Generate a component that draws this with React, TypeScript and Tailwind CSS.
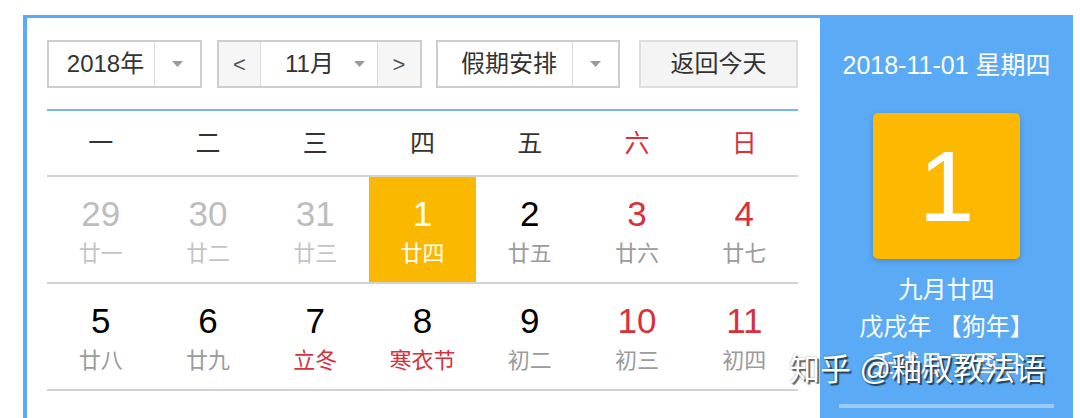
import React from 'react';

type Day = {
  num: number;
  lunar: string;
  muted?: boolean;
  redNum?: boolean;
  redLunar?: boolean;
  today?: boolean;
};

const WEEKDAYS = ['一', '二', '三', '四', '五', '六', '日'];

const WEEKS: Day[][] = [
  [
    { num: 29, lunar: '廿一', muted: true },
    { num: 30, lunar: '廿二', muted: true },
    { num: 31, lunar: '廿三', muted: true },
    { num: 1, lunar: '廿四', today: true },
    { num: 2, lunar: '廿五' },
    { num: 3, lunar: '廿六', redNum: true },
    { num: 4, lunar: '廿七', redNum: true },
  ],
  [
    { num: 5, lunar: '廿八' },
    { num: 6, lunar: '廿九' },
    { num: 7, lunar: '立冬', redLunar: true },
    { num: 8, lunar: '寒衣节', redLunar: true },
    { num: 9, lunar: '初二' },
    { num: 10, lunar: '初三', redNum: true },
    { num: 11, lunar: '初四', redNum: true },
  ],
];

function Caret() {
  return (
    <svg width="11" height="6" viewBox="0 0 11 6">
      <path d="M0 0h11L5.5 6z" fill="#9a9a9a" />
    </svg>
  );
}

function DayCell({ day }: { day: Day }) {
  let numColor = 'text-black';
  let lunarColor = 'text-[#9b9b9b]';
  if (day.muted) {
    numColor = 'text-[#bdbdbd]';
    lunarColor = 'text-[#c4c4c4]';
  }
  if (day.redNum) numColor = 'text-[#d7313b]';
  if (day.redLunar) lunarColor = 'text-[#d7313b]';
  if (day.today) {
    numColor = 'text-white';
    lunarColor = 'text-white';
  }

  return (
    <div
      className={`flex flex-col items-center pt-[20px] h-[105px] ${
        day.today ? 'bg-[#fbb800]' : ''
      }`}
    >
      <div className={`text-[35px] leading-[34px] ${numColor}`}>{day.num}</div>
      <div className={`mt-[10px] text-[22px] leading-[26px] ${lunarColor}`}>
        {day.lunar}
      </div>
    </div>
  );
}

export default function App() {
  return (
    <div className="relative w-[1080px] h-[418px] overflow-hidden bg-white pl-[23px] pt-[15px] font-['Liberation_Sans','Noto_Sans_CJK_SC',sans-serif]">
      <div className="flex w-[1050px] h-[420px] border-t-[3px] border-l-[4px] border-[#5aaaf5]">
        {/* calendar body */}
        <div className="w-[793px] pl-[20px] pr-[22px] pt-[22px]">
          <div className="flex items-center h-[48px] text-[24px] text-[#333]">
            <div className="flex h-full w-[155px] border-2 border-[#cdcdcd]">
              <div className="flex items-center justify-center w-[106px] pl-[8px] border-r border-[#dcdcdc]">
                2018年
              </div>
              <div className="flex flex-1 items-center justify-center">
                <Caret />
              </div>
            </div>

            <div className="ml-[15px] flex h-full w-[205px] border-2 border-[#cdcdcd]">
              <div className="flex items-center justify-center w-[42px] bg-[#f6f6f6] border-r border-[#dcdcdc] text-[22px] text-[#555]">
                &lt;
              </div>
              <div className="flex items-center justify-center gap-[20px] w-[117px] pl-[12px] border-r border-[#dcdcdc]">
                <span>11月</span>
                <Caret />
              </div>
              <div className="flex flex-1 items-center justify-center bg-[#f6f6f6] text-[22px] text-[#555]">
                &gt;
              </div>
            </div>

            <div className="ml-[14px] flex h-full w-[184px] border-2 border-[#cdcdcd]">
              <div className="flex items-center justify-center w-[135px] pl-[8px] border-r border-[#dcdcdc]">
                假期安排
              </div>
              <div className="flex flex-1 items-center justify-center">
                <Caret />
              </div>
            </div>

            <div className="ml-[19px] flex h-full flex-1 items-center justify-center border-2 border-[#dedede] bg-[#f4f4f4]">
              返回今天
            </div>
          </div>

          <div className="mt-[21px] border-t-2 border-[#78b6ee]" />

          <div className="grid grid-cols-7 h-[66px] border-b-2 border-[#d2d2d2] text-[25px]">
            {WEEKDAYS.map((w, i) => (
              <div
                key={w}
                className={`flex items-center justify-center pt-[2px] ${
                  i >= 5 ? 'text-[#d7313b]' : 'text-[#333]'
                }`}
              >
                {w}
              </div>
            ))}
          </div>

          {WEEKS.map((week, wi) => (
            <div key={wi} className="grid grid-cols-7 border-b-2 border-[#d2d2d2]">
              {week.map((d) => (
                <DayCell key={`${wi}-${d.num}`} day={d} />
              ))}
            </div>
          ))}
        </div>

        {/* today panel */}
        <div className="flex w-[253px] flex-col items-center bg-[#5aaaf5] pt-[31px] text-white">
          <div className="text-[25px] leading-[32px]">2018-11-01 星期四</div>
          <div className="mt-[32px] flex h-[146px] w-[147px] items-center justify-center rounded-[5px] bg-[#fdb801] shadow-[0_2px_6px_rgba(0,0,0,0.18)]">
            <span className="text-[100px] leading-none">1</span>
          </div>
          <div className="mt-[13px] text-[24px] leading-[36px]">九月廿四</div>
          <div className="text-[24px] leading-[37px]">戊戌年 【狗年】</div>
          <div className="text-[24px] leading-[37px]">壬戌月 丁酉日</div>
          <div className="mt-[22px] h-[4px] w-[215px] bg-[#9ccbf9]" />
        </div>
      </div>

      {/* site watermark */}
      <div className="absolute left-[789px] top-[350px] text-[31px] leading-[40px] text-white [text-shadow:2px_2px_1px_rgba(0,0,0,0.6),0_0_2px_rgba(0,0,0,0.4)]">
        知乎 @釉叔教法语
      </div>
    </div>
  );
}
